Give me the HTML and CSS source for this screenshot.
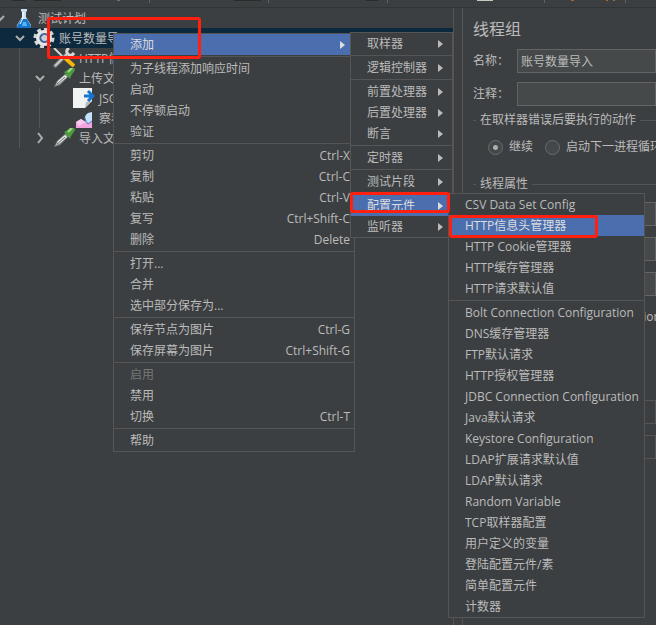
FILE: index.html
```html
<!DOCTYPE html>
<html lang="zh-CN">
<head>
    <meta charset="UTF-8">
    <meta name="viewport" content="width=device-width, initial-scale=1.0">
    <title>线程组</title>
    <link rel="stylesheet" href="styles.css">
</head>
<body>
    <header class="toolbar">
        <svg width="656" height="7" viewBox="0 0 656 7">
            <path d="M12 0h13M34 0h27M234 0h27M366 0h12" stroke="#2b2b2b" stroke-width="2"/>
            <path d="M149.500 0v3M268.500 0v3M387.500 0v3M544.500 0v3M625.500 0v3" stroke="#5f6162"/>
            <path d="M477 0h16" stroke="#c8c8c0" stroke-width="2"/>
            <path d="M571 0h3M606 0h2M613 0h2" stroke="#a06a3c" stroke-width="2"/>
            <path d="M117 0h3" stroke="#6d7072" stroke-width="2"/>
        </svg>
    </header>

    <main class="workspace">
        <nav class="tree">
            <ul>
                <li class="row level0">
                    <svg class="twist" viewBox="0 0 12 12"><path d="M2 4l4 4 4-4"/></svg>
                    <svg class="icon" width="20" height="20" viewBox="0 0 20 20">
                        <path d="M7 1h6v2l-1 1v5l5 8q0 3-2 3H5q-3 0-2-3l5-8V4L7 3z" fill="#c9dfef"/>
                        <path d="M7 11h6l4 7q0 2-2 2H5q-3 0-2-2z" fill="#1976cf"/>
                        <path d="M9 4v6l-3 6" stroke="#fff" fill="none"/>
                        <path d="M9 14h3l1 4H8z" fill="#52b8f4"/>
                    </svg>
                    <span>测试计划</span>
                </li>
                <li class="row level1 selected">
                    <svg class="twist" viewBox="0 0 12 12"><path d="M2 4l4 4 4-4"/></svg>
                    <svg class="icon" width="22" height="20" viewBox="0 0 22 20">
                        <circle cx="11" cy="10" r="9" fill="none" stroke="#d5d5d5" stroke-width="3" stroke-dasharray="4 3"/>
                        <circle cx="11" cy="10" r="6" fill="#c9ced8" stroke="#e6e6e6" stroke-width="4"/>
                        <path d="M14 7a4 4 0 1 0 0 6" fill="none" stroke="#3e629b" stroke-width="2"/>
                    </svg>
                    <span>账号数量导入</span>
                </li>
                <li class="row level2">
                    <span class="twist"></span>
                    <svg class="icon" width="22" height="20" viewBox="0 0 22 20">
                        <path d="M1 0l11 11" stroke="#d4d4cf" stroke-width="2"/>
                        <path d="M12 10l9 8" stroke="#f5b50a" stroke-width="4"/>
                        <path d="M1 19L15 5" stroke="#777" stroke-width="4"/>
                        <path d="M2 18L15 5" stroke="#c8cac8" stroke-width="2"/>
                        <path d="M16 0q-4 3-1 6 3 3 6-1" fill="none" stroke="#d8d8d4" stroke-width="3"/>
                    </svg>
                    <span>HTTP信息头管理器</span>
                </li>
                <li class="row level2">
                    <svg class="twist" viewBox="0 0 12 12"><path d="M2 4l4 4 4-4"/></svg>
                    <svg class="icon" width="22" height="20" viewBox="0 0 22 20">
                        <path d="M1 19l3-6 9-8 3 3-9 9z" fill="#858a88"/>
                        <path d="M3 17l2-4 7-6 2 2-7 6z" fill="#e8eceb"/>
                        <path d="M4 16l8-7" stroke="#63716e"/>
                        <path d="M11 4l2-1 5-4h3l1 3-4 6-1 3z" fill="#4c9b3e"/>
                        <path d="M15 4l4-4" stroke="#a0d78a" stroke-width="2"/>
                    </svg>
                    <span>上传文件</span>
                </li>
                <li class="row level3">
                    <span class="twist"></span>
                    <svg class="icon" width="22" height="20" viewBox="0 0 22 20">
                        <path d="M0 0h19v13l-7 7H0z" fill="#f1f2f2"/>
                        <path d="M12 20l1-6 6-1z" fill="#b8bbbd"/>
                        <path d="M11 8h8M15 3l5 5-5 5" fill="none" stroke="#1674d1" stroke-width="3"/>
                    </svg>
                    <span>JSON提取器</span>
                </li>
                <li class="row level3">
                    <span class="twist"></span>
                    <svg class="icon" width="22" height="20" viewBox="0 0 22 20">
                        <path d="M3 20v-6l5-3 4 3 7-10v16z" fill="#f0a5df"/>
                        <path d="M3 14l5-3 5 3-7 4z" fill="#f8c7ed"/>
                        <path d="M12 12q-1-4 3-7l4-1v9l-4 3z" fill="#c4e2fa"/>
                        <path d="M12 10q1 4 3 6l4-3" fill="none" stroke="#397fc8"/>
                    </svg>
                    <span>察看结果树</span>
                </li>
                <li class="row level2">
                    <svg class="twist" viewBox="0 0 12 12"><path d="M4 1l4 5-4 5"/></svg>
                    <svg class="icon" width="22" height="20" viewBox="0 0 22 20">
                        <path d="M1 19l3-6 9-8 3 3-9 9z" fill="#858a88"/>
                        <path d="M3 17l2-4 7-6 2 2-7 6z" fill="#e8eceb"/>
                        <path d="M4 16l8-7" stroke="#63716e"/>
                        <path d="M11 4l2-1 5-4h3l1 3-4 6-1 3z" fill="#4c9b3e"/>
                        <path d="M15 4l4-4" stroke="#a0d78a" stroke-width="2"/>
                    </svg>
                    <span>导入文件</span>
                </li>
            </ul>
        </nav>

        <form class="editor">
            <h1>线程组</h1>
            <div class="field">
                <label for="name">名称：</label>
                <input type="text" id="name" value="账号数量导入">
            </div>
            <div class="field">
                <label for="comment">注释：</label>
                <input type="text" id="comment">
            </div>

            <section class="group">
                <h2>在取样器错误后要执行的动作</h2>
                <div class="radios">
                    <label><input type="radio" name="action" checked>继续</label>
                    <label><input type="radio" name="action">启动下一进程循环</label>
                </div>
            </section>

            <section class="group">
                <h2>线程属性</h2>
                <div class="props">
                    <input type="text" aria-label="线程数">
                    <input type="text" aria-label="Ramp-Up时间">
                    <input type="text" aria-label="循环次数">
                </div>
                <label class="check"><input type="checkbox" checked>Same user on each iteration</label>
                <div class="props">
                    <input type="text" aria-label="持续时间" disabled>
                    <input type="text" aria-label="启动延迟" disabled>
                </div>
            </section>
        </form>
    </main>

    <!-- 右键菜单 -->
    <div class="menu menu-main">
        <button class="active more">添加</button>
        <hr>
        <button>为子线程添加响应时间</button>
        <button>启动</button>
        <button>不停顿启动</button>
        <button>验证</button>
        <hr>
        <button>剪切<kbd>Ctrl-X</kbd></button>
        <button>复制<kbd>Ctrl-C</kbd></button>
        <button>粘贴<kbd>Ctrl-V</kbd></button>
        <button>复写<kbd>Ctrl+Shift-C</kbd></button>
        <button>删除<kbd>Delete</kbd></button>
        <hr>
        <button>打开...</button>
        <button>合并</button>
        <button>选中部分保存为...</button>
        <hr>
        <button>保存节点为图片<kbd>Ctrl-G</kbd></button>
        <button>保存屏幕为图片<kbd>Ctrl+Shift-G</kbd></button>
        <hr>
        <button disabled>启用</button>
        <button>禁用</button>
        <button>切换<kbd>Ctrl-T</kbd></button>
        <hr>
        <button>帮助</button>
    </div>

    <div class="menu menu-add">
        <button class="more">取样器</button>
        <hr>
        <button class="more">逻辑控制器</button>
        <hr>
        <button class="more">前置处理器</button>
        <button class="more">后置处理器</button>
        <button class="more">断言</button>
        <hr>
        <button class="more">定时器</button>
        <hr>
        <button class="more">测试片段</button>
        <hr>
        <button class="active more">配置元件</button>
        <button class="more">监听器</button>
    </div>

    <div class="menu menu-config">
        <button>CSV Data Set Config</button>
        <button class="active">HTTP信息头管理器</button>
        <button>HTTP Cookie管理器</button>
        <button>HTTP缓存管理器</button>
        <button>HTTP请求默认值</button>
        <hr>
        <button>Bolt Connection Configuration</button>
        <button>DNS缓存管理器</button>
        <button>FTP默认请求</button>
        <button>HTTP授权管理器</button>
        <button>JDBC Connection Configuration</button>
        <button>Java默认请求</button>
        <button>Keystore Configuration</button>
        <button>LDAP扩展请求默认值</button>
        <button>LDAP默认请求</button>
        <button>Random Variable</button>
        <button>TCP取样器配置</button>
        <button>用户定义的变量</button>
        <button>登陆配置元件/素</button>
        <button>简单配置元件</button>
        <button>计数器</button>
    </div>

    <!-- 红框标注 -->
    <div class="mark mark-main"></div>
    <div class="mark mark-add"></div>
    <div class="mark mark-config"></div>
</body>
</html>
```
FILE: styles.css
```css
* {
    box-sizing: border-box;
}
body {
    position: relative;
    display: flex;
    flex-direction: column;
    min-height: 100vh;
    margin: 0;
    overflow: hidden;
    background-color: #3c3f41;
    color: #bbb;
    font-family: "Open Sans", "Noto Sans CJK SC", sans-serif;
    font-size: 12px;
    line-height: 20px;
    white-space: nowrap;
}
button, input {
    font: inherit;
    color: inherit;
}
.toolbar {
    height: 8px;
    border-bottom: 1px solid #323536;
    overflow: hidden;
}
.toolbar svg {
    display: block;
}
.workspace {
    display: flex;
    flex: 1;
}

/* 左侧树 */
.tree {
    flex: 0 0 454px;
    border-right: 1px solid #555;
}
.tree ul {
    margin: 0;
    padding: 0;
    list-style: none;
}
.row {
    display: flex;
    align-items: center;
    height: 20px;
}
.row span {
    padding-top: 2px;
}
.row.selected {
    background-color: #0d293e;
}
.twist {
    flex: none;
    width: 12px;
    height: 12px;
    margin-right: 7px;
    fill: none;
    stroke: #adadad;
    stroke-width: 2;
}
.icon {
    flex: none;
    margin-right: 4px;
}
.level0 {
    margin-left: -6px;
}
.level0 .twist {
    margin-right: 8px;
}
.level1 {
    padding-left: 14px;
}
.level2, .level3 {
    background: linear-gradient(#555, #555) 19px 0 / 1px 100% no-repeat;
}
.level2 {
    padding-left: 34px;
}
.level3 {
    padding-left: 54px;
    background-image: linear-gradient(#555, #555), linear-gradient(#555, #555);
    background-position: 19px 0, 39px 0;
}

/* 右侧表单 */
.editor {
    flex: 1;
    min-width: 0;
    margin-left: 8px;
    padding: 10px 0 0 10px;
    border-left: 1px solid #555;
    overflow: hidden;
}
h1 {
    margin: 0;
    font-size: 16px;
    font-weight: normal;
    line-height: 22px;
}
.field {
    display: flex;
    align-items: center;
    gap: 8px;
    margin-top: 9px;
}
.editor input[type="text"] {
    flex: 1;
    min-width: 0;
    height: 24px;
    padding: 0 3px;
    border: 1px solid #646464;
    background-color: #45494a;
}
.editor input[type="text"]:disabled {
    border-color: #555;
    background-color: #3c3f41;
}
.group {
    margin: 4px 0 17px;
}
h2 {
    display: flex;
    align-items: center;
    gap: 4px;
    margin: 0;
    font-size: 12px;
    font-weight: normal;
}
h2::before, h2::after {
    content: "";
    width: 3px;
    height: 1px;
    background-color: #555;
}
h2::after {
    flex: 1;
}
.radios {
    display: flex;
    gap: 12px;
    padding: 7px 0 0 15px;
}
.radios label {
    display: flex;
    align-items: center;
    gap: 6px;
}
input[type="radio"] {
    appearance: none;
    width: 15px;
    height: 15px;
    margin: 0;
    border: 1px solid #6b6b6b;
    border-radius: 50%;
    background-color: #43494a;
}
input[type="radio"]:checked {
    background-image: radial-gradient(circle, #adadad 2px, transparent 3px);
}
.props {
    display: flex;
    flex-direction: column;
    gap: 11px;
    padding: 8px 0 0 60px;
}
.editor .props input[type="text"] {
    flex: none;
}
.check {
    display: flex;
    align-items: center;
    gap: 4px;
    margin: 11px 0 65px 14px;
}
.check input {
    width: 13px;
    height: 13px;
    margin: 0;
}

/* 弹出菜单 */
.menu {
    position: absolute;
    border: 1px solid #555;
    background-color: #3c3f41;
}
.menu-main {
    left: 113px;
    top: 33px;
    width: 242px;
}
.menu-add {
    left: 350px;
    top: 32px;
    width: 103px;
}
.menu-config {
    left: 448px;
    top: 193px;
    width: 197px;
}
.menu button {
    display: flex;
    align-items: center;
    justify-content: space-between;
    width: 100%;
    height: 21px;
    padding: 1px 4px 0 16px;
    border: none;
    background: none;
}
.menu button.active {
    background-color: #4b6eaf;
    color: #ddd;
}
.menu button:disabled {
    color: #777;
}
.menu hr {
    height: 3px;
    margin: 0;
    border: 0;
    background: linear-gradient(#555, #555) 0 1px / 100% 1px no-repeat;
}
.menu kbd {
    font: inherit;
}
.more::after {
    content: "";
    margin-right: 5px;
    border-left: 5px solid currentColor;
    border-top: 4px solid transparent;
    border-bottom: 4px solid transparent;
}

.mark {
    position: absolute;
    border: 3px solid #ff2010;
    border-radius: 3px;
}
.mark-main {
    left: 47px;
    top: 17px;
    width: 154px;
    height: 42px;
}
.mark-add {
    left: 350px;
    top: 192px;
    width: 100px;
    height: 21px;
}
.mark-config {
    left: 449px;
    top: 215px;
    width: 149px;
    height: 23px;
}
```
